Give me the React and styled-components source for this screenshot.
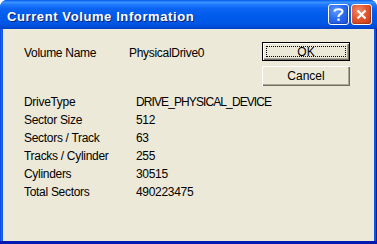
import React from 'react';
import styled, { createGlobalStyle } from 'styled-components';

const GlobalStyle = createGlobalStyle`
  html, body {
    margin: 0;
    padding: 0;
    background: #ffffff;
  }
  body {
    width: 377px;
    height: 244px;
    overflow: hidden;
  }
`;

const Window = styled.div`
  width: 377px;
  height: 244px;
  display: flex;
  flex-direction: column;
  box-sizing: border-box;
  border-radius: 7px 7px 0 0;
  overflow: hidden;
  background: #0a55e6;
`;

const TitleBar = styled.div`
  height: 29px;
  flex: none;
  display: flex;
  align-items: center;
  padding: 0 5px 0 7px;
  background: linear-gradient(
    to bottom,
    #0058ee 0%,
    #3d95ff 8%,
    #1f7afd 16%,
    #0b63f2 30%,
    #005bea 55%,
    #0057e5 80%,
    #004cd8 92%,
    #003fc4 100%
  );
`;

const Title = styled.div`
  flex: 1;
  color: #ffffff;
  font-family: 'Liberation Sans', Arial, sans-serif;
  font-weight: bold;
  font-size: 13px;
  letter-spacing: 0.6px;
  text-shadow: 1px 1px 0 #0a1e70;
  margin-top: 3px;
`;

const Controls = styled.div`
  display: flex;
  gap: 2px;
`;

const CaptionButton = styled.div`
  width: 21px;
  height: 21px;
  box-sizing: border-box;
  border: 1px solid #ffffff;
  border-radius: 3px;
  display: flex;
  align-items: center;
  justify-content: center;
  background: ${({ $close }) =>
    $close
      ? 'radial-gradient(circle at 35% 30%, #f08c6c 0%, #e2572e 45%, #c73a13 100%)'
      : 'radial-gradient(circle at 35% 30%, #5d9cff 0%, #2b6cf0 45%, #1a4fd8 100%)'};
  box-shadow: inset -1px -1px 1px rgba(0, 0, 0, 0.2);
`;

const Frame = styled.div`
  flex: 1;
  display: flex;
  padding: 0 3px 3px 3px;
  background: linear-gradient(to right, #0831d9 0, #166aee 1px, #0a55e6 3px);
  box-shadow: inset 0 -3px 0 #0019b0, inset -1px 0 0 #001ea0;
`;

const Client = styled.div`
  flex: 1;
  background: #ece9d8;
  padding: 0 24px 0 21px;
  font-family: 'Liberation Sans', Arial, sans-serif;
  font-size: 12px;
  letter-spacing: -0.3px;
  color: #000000;
`;

const TopSection = styled.div`
  display: flex;
  justify-content: space-between;
  align-items: flex-start;
`;

const NameRow = styled.div`
  display: grid;
  grid-template-columns: 105px auto;
  margin-top: 17px;
  line-height: 14px;
`;

const ButtonColumn = styled.div`
  display: flex;
  flex-direction: column;
  gap: 5px;
  margin-top: 13px;
`;

const Button = styled.div`
  width: 88px;
  height: ${({ $default }) => ($default ? '19px' : '20px')};
  box-sizing: border-box;
  display: flex;
  align-items: center;
  justify-content: center;
  background: #ece9d8;
  font-family: 'Liberation Sans', Arial, sans-serif;
  font-size: 12px;
  letter-spacing: 0;
  position: relative;
  border: ${({ $default }) => ($default ? '1px solid #000000' : 'none')};
  box-shadow: inset 1px 1px 0 #ffffff, inset -1px -1px 0 #716f64,
    inset -2px -2px 0 #aca899;
`;

const FocusRing = styled.div`
  position: absolute;
  inset: 3px;
  border: 1px dotted #000000;
`;

const Props = styled.div`
  display: grid;
  grid-template-columns: 112px auto;
  grid-auto-rows: 18px;
  align-items: center;
  margin-top: 7px;
`;

const Cell = styled.div`
  white-space: nowrap;
  letter-spacing: ${({ $caps }) => ($caps ? '-0.9px' : 'inherit')};
`;

const rows = [
  ['DriveType', 'DRIVE_PHYSICAL_DEVICE'],
  ['Sector Size', '512'],
  ['Sectors / Track', '63'],
  ['Tracks / Cylinder', '255'],
  ['Cylinders', '30515'],
  ['Total Sectors', '490223475'],
];

const App = () => {
  return (
    <>
      <GlobalStyle />
      <Window>
        <TitleBar>
          <Title>Current Volume Information</Title>
          <Controls>
            <CaptionButton>
              <svg width="13" height="15" viewBox="0 0 13 15">
                <path
                  d="M2.5 4.5 C2.5 1.5 10.5 1.5 10.5 4.5 C10.5 7 6.5 7 6.5 9.5 L6.5 10"
                  stroke="#ffffff"
                  strokeWidth="2.2"
                  fill="none"
                />
                <rect x="5.4" y="11.5" width="2.3" height="2.3" fill="#ffffff" />
              </svg>
            </CaptionButton>
            <CaptionButton $close>
              <svg width="13" height="13" viewBox="0 0 13 13">
                <path
                  d="M2.5 2.5 L10.5 10.5 M10.5 2.5 L2.5 10.5"
                  stroke="#ffffff"
                  strokeWidth="2.2"
                />
              </svg>
            </CaptionButton>
          </Controls>
        </TitleBar>
        <Frame>
          <Client>
            <TopSection>
              <NameRow>
                <Cell>Volume Name</Cell>
                <Cell>PhysicalDrive0</Cell>
              </NameRow>
              <ButtonColumn>
                <Button $default>
                  OK
                  <FocusRing />
                </Button>
                <Button>Cancel</Button>
              </ButtonColumn>
            </TopSection>
            <Props>
              {rows.map(([label, value]) => (
                <React.Fragment key={label}>
                  <Cell>{label}</Cell>
                  <Cell $caps={value === value.toUpperCase() && /[A-Z]/.test(value)}>
                    {value}
                  </Cell>
                </React.Fragment>
              ))}
            </Props>
          </Client>
        </Frame>
      </Window>
    </>
  );
};

export default App;
